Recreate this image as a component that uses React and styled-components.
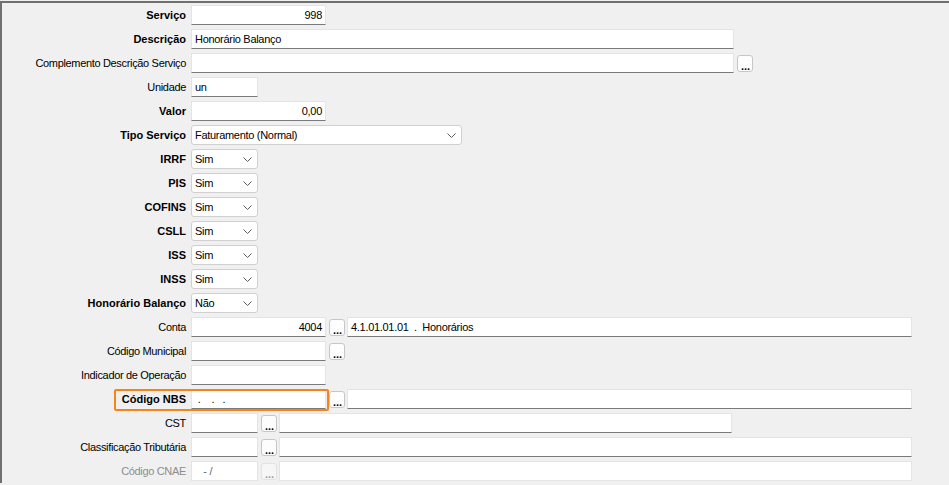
import React from 'react'
import styled, { createGlobalStyle } from 'styled-components'

const GlobalStyle = createGlobalStyle`
  html, body {
    margin: 0;
    padding: 0;
    background: #f0f0f0;
    font-family: "Liberation Sans", Arial, sans-serif;
    font-size: 11px;
    color: #000;
    overflow: hidden;
  }
`

const Frame = styled.div`
  margin-top: 1px;
  border-top: 2px solid #707070;
  border-left: 2px solid #707070;
  background: #f0f0f0;
  height: 482px;
  box-sizing: border-box;
`

const Row = styled.div`
  position: relative;
  display: flex;
  align-items: center;
  height: 24px;
`

const Label = styled.div`
  flex: none;
  width: 189px;
  box-sizing: border-box;
  padding-right: 5px;
  text-align: right;
  white-space: nowrap;
  font-weight: ${(p) => (p.$bold ? 700 : 400)};
  letter-spacing: ${(p) => (p.$bold ? '0' : '-0.33px')};
  color: ${(p) => (p.$disabled ? '#8d8d8d' : '#000')};
`

const TextBox = styled.div`
  flex: none;
  width: ${(p) => p.$w}px;
  height: 20px;
  box-sizing: border-box;
  border: 1px solid #e4e4e4;
  border-bottom-color: ${(p) => (p.$disabled ? '#e4e4e4' : '#7a7a7a')};
  background: #fff;
  padding: 0 3px;
  line-height: 18px;
  white-space: pre;
  overflow: hidden;
  letter-spacing: -0.3px;
  text-align: ${(p) => (p.$right ? 'right' : 'left')};
  color: ${(p) => (p.$disabled ? '#6a6a6a' : '#000')};
`

const Select = styled.div`
  flex: none;
  width: ${(p) => p.$w}px;
  height: 20px;
  box-sizing: border-box;
  border: 1px solid #d0d0d0;
  border-radius: 3px;
  background: #fff;
  padding: 0 5px 0 3px;
  letter-spacing: -0.3px;
  display: flex;
  align-items: center;
  justify-content: space-between;
`

const DotsButton = styled.div`
  flex: none;
  width: 16px;
  height: 17px;
  box-sizing: border-box;
  margin: 0 2px 0 3px;
  border: 1px solid ${(p) => (p.$disabled ? '#e2e2e2' : '#c6c6c6')};
  border-radius: 3px;
  background: ${(p) => (p.$disabled ? '#f6f6f6' : '#fdfdfd')};
  color: ${(p) => (p.$disabled ? '#9a9a9a' : '#000')};
  font-size: 11px;
  font-weight: 700;
  line-height: 17px;
  text-align: center;
  & span {
    position: relative;
    top: 2px;
    left: 0.5px;
  }
`

const Highlight = styled.div`
  position: absolute;
  left: 112px;
  top: 2px;
  width: 215px;
  height: 22px;
  box-sizing: border-box;
  border: 2px solid #f7831b;
  border-radius: 2px;
  pointer-events: none;
`

const Chevron = () => (
  <svg width="9" height="5" viewBox="0 0 9 5" fill="none">
    <polyline points="0.5,0.5 4.5,4.5 8.5,0.5" stroke="#5a5a5a" strokeWidth="1" />
  </svg>
)

const Dots = ({ disabled }) => (
  <DotsButton $disabled={disabled}>
    <span>...</span>
  </DotsButton>
)

const YesNo = ({ label, value = 'Sim' }) => (
  <Row>
    <Label $bold>{label}</Label>
    <Select $w={67}>
      {value}
      <Chevron />
    </Select>
  </Row>
)

const taxes = ['IRRF', 'PIS', 'COFINS', 'CSLL', 'ISS', 'INSS']

const App = () => {
  return (
    <>
      <GlobalStyle />
      <Frame>
        <Row>
          <Label $bold>Serviço</Label>
          <TextBox $w={135} $right>998</TextBox>
        </Row>
        <Row>
          <Label $bold>Descrição</Label>
          <TextBox $w={543}>Honorário Balanço</TextBox>
        </Row>
        <Row>
          <Label>Complemento Descrição Serviço</Label>
          <TextBox $w={543} />
          <Dots />
        </Row>
        <Row>
          <Label>Unidade</Label>
          <TextBox $w={67}>un</TextBox>
        </Row>
        <Row>
          <Label $bold>Valor</Label>
          <TextBox $w={135} $right>0,00</TextBox>
        </Row>
        <Row>
          <Label $bold>Tipo Serviço</Label>
          <Select $w={271}>
            Faturamento (Normal)
            <Chevron />
          </Select>
        </Row>
        {taxes.map((t) => (
          <YesNo key={t} label={t} />
        ))}
        <YesNo label="Honorário Balanço" value="Não" />
        <Row>
          <Label>Conta</Label>
          <TextBox $w={135} $right>4004</TextBox>
          <Dots />
          <TextBox $w={565}>4.1.01.01.01  .  Honorários</TextBox>
        </Row>
        <Row>
          <Label>Código Municipal</Label>
          <TextBox $w={135} />
          <Dots />
        </Row>
        <Row>
          <Label>Indicador de Operação</Label>
          <TextBox $w={135} />
        </Row>
        <Row>
          <Label $bold>Código NBS</Label>
          <TextBox $w={135}>{' .    .   .'}</TextBox>
          <Dots />
          <TextBox $w={565} />
          <Highlight />
        </Row>
        <Row>
          <Label>CST</Label>
          <TextBox $w={67} />
          <Dots />
          <TextBox $w={453} />
        </Row>
        <Row>
          <Label>Classificação Tributária</Label>
          <TextBox $w={67} />
          <Dots />
          <TextBox $w={633} />
        </Row>
        <Row>
          <Label $disabled>Código CNAE</Label>
          <TextBox $w={67} $disabled>{'   - /'}</TextBox>
          <Dots disabled />
          <TextBox $w={633} $disabled />
        </Row>
      </Frame>
    </>
  )
}

export default App
